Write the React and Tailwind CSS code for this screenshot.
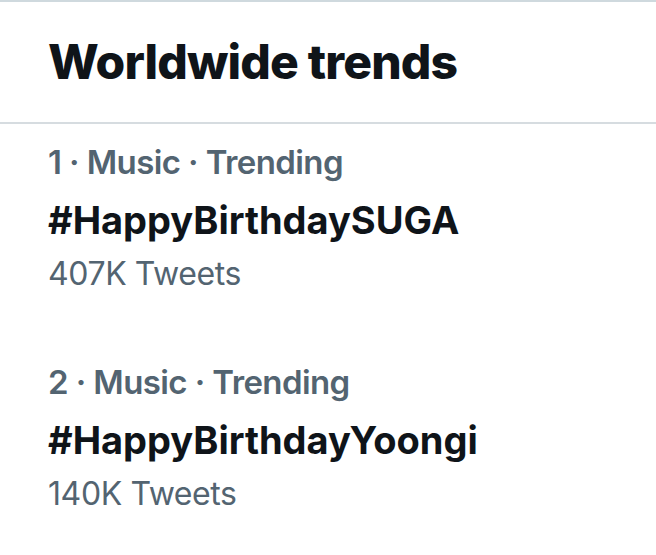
import React from 'react';

const trends = [
  { rank: 1, category: 'Music', tag: '#HappyBirthdaySUGA', count: '407K Tweets' },
  { rank: 2, category: 'Music', tag: '#HappyBirthdayYoongi', count: '140K Tweets' },
];

const font = { fontFamily: 'Inter, "Noto Sans", sans-serif' };

export default function App() {
  return (
    <div className="w-[656px] h-[555px] bg-white border-t-2 border-[#cfd9de] overflow-hidden" style={font}>
      <div className="h-[122px] flex items-center px-[48px] border-b-2 border-[#d6dce0]">
        <h2 className="text-[48px] leading-[56px] font-extrabold text-[#0f1419] tracking-[-0.85px]">
          Worldwide trends
        </h2>
      </div>

      {trends.map((t) => (
        <div key={t.rank} className="px-[48px] pt-[14px] pb-[50px]">
          <div className="h-[50px] flex items-center text-[33px] font-semibold text-[#536471] tracking-[-0.6px]">
            {t.rank} · {t.category} · Trending
          </div>
          <div className="h-[65px] flex items-center text-[38px] font-bold text-[#0f1419]">
            {t.tag}
          </div>
          <div className="h-[41px] flex items-center text-[32px] text-[#536471] tracking-[-0.4px]">
            {t.count}
          </div>
        </div>
      ))}
    </div>
  );
}
